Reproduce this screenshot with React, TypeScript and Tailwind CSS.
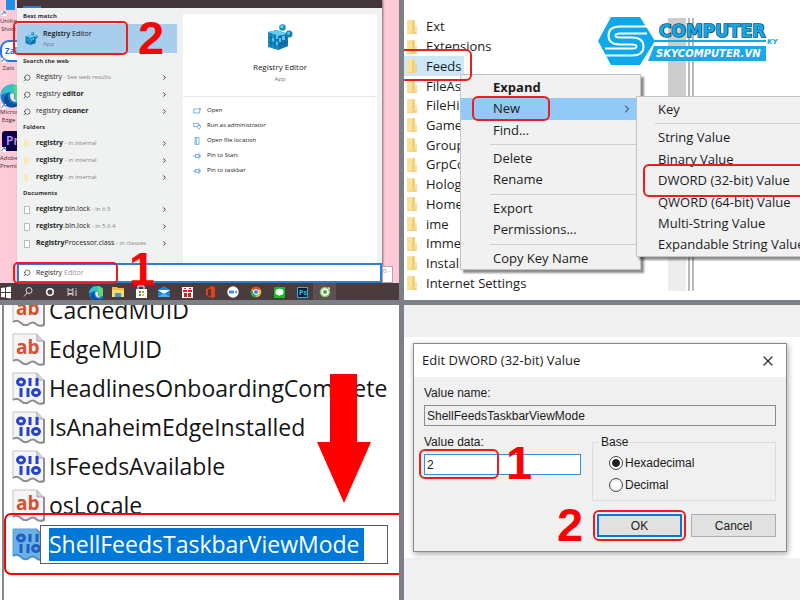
import type { ReactNode } from 'react';
import { ChevronRight, Search, X } from 'lucide-react';

const UI = "font-['Open_Sans','Noto_Sans',sans-serif]";
const ARIAL = "font-['Liberation_Sans',Arial,sans-serif]";

function Step({ n, className }: { n: number; className: string }) {
  return (
    <span
      className={`pointer-events-none absolute z-20 font-['Liberation_Sans',sans-serif] text-[47px] leading-none font-bold text-[#f60505] ${className}`}
    >
      {n}
    </span>
  );
}

function Mark({ className }: { className: string }) {
  return <span className={`pointer-events-none absolute z-20 border-2 border-[#ee1c1c] ${className}`} />;
}

/* ---------- start menu ---------- */

function RegistryIcon({ className }: { className: string }) {
  return (
    <svg viewBox="0 0 26 26" className={className} aria-hidden="true">
      <path d="M1 8 10 6 21 10 21 22 11 26 1 23Z" fill="#1b8fc6" />
      <path d="M1 8 10 6 21 10 11 12Z" fill="#63cdf1" />
      <path d="M11 12 21 10 21 22 11 26Z" fill="#1279b4" />
      <path d="M4 9v14M8 10v15M1 13l10 3 10-3M1 18l10 3 10-3M14 12v12M18 11v12" stroke="#0f5f94" strokeWidth="0.800" fill="none" />
      <path d="M5 14h2v3H5zM9 11h2v4H9zM12 14h2v4h-2zM15 12h3v4h-3zM9 18h2v3H9z" fill="#55c6ef" />
      <circle cx="15.500" cy="3.500" r="3.300" fill="#1d8fc6" />
      <circle cx="14.800" cy="2.600" r="1.500" fill="#6fd2f4" />
      <circle cx="22" cy="10" r="3.500" fill="#187fb6" />
      <circle cx="21.500" cy="9" r="1.500" fill="#62c9ef" />
    </svg>
  );
}

function EdgeIcon({ className }: { className: string }) {
  return (
    <svg viewBox="0 0 24 24" className={className} aria-hidden="true">
      <circle cx="12" cy="12" r="11.500" fill="#1477d0" />
      <path d="M.6 12C1 5 6 .5 12 .5c7 0 11.500 5 11.500 10 0 4-3 6-6 6-2.500 0-3.500-1-3-2 1.500-3 0-6-4-6-4.500 0-8.500 1.500-9.900 3.500Z" fill="#35c1c9" />
      <path d="M14 1c6 1 9.500 5 9.500 9.500 0 4-3 6-6 6-2.500 0-3.500-1-3-2 1-2 1-4-.5-5.500Z" fill="#5fd87a" />
      <path d="M8 12c0 6 5 9 12 7.500-4 5-12 5-15.500-.5C3 15 5 9 10 8.500 8.500 9.500 8 10.500 8 12Z" fill="#0d4f9e" />
      <path d="M10 11c0-2 3-2.500 4-.5.600 1.500 0 2.500 0 4 0 1.500 2 2.500 4 2.500-5 2.500-8-1.500-8-6Z" fill="#fbe3ea" />
    </svg>
  );
}

function Shortcut() {
  return (
    <svg viewBox="0 0 6 6" className="absolute -bottom-px left-px size-[5px]" aria-hidden="true">
      <path d="M0 0h6v6H0z" fill="#fff" />
      <path d="M1 5C1 3 2 2 4 2M2.500 1H5v2.500" stroke="#1559a8" fill="none" />
    </svg>
  );
}

function DesktopIcons() {
  const label = 'text-center text-[6px] leading-[8px] text-[#3a2a30]';
  return (
    <div className="flex w-[17px] shrink-0 flex-col overflow-hidden">
      <div className="relative flex h-[15px] justify-end pr-[2px]">
        <span className="h-[10px] w-[9px] bg-[#1f8fe8]" />
        <Shortcut />
      </div>
      <div className={`h-[25px] pt-[2px] ${label}`}>UniKey<br />Short</div>
      <div className="relative h-[22px]">
        <div className="flex h-[22px] w-[30px] items-center rounded-[9px] border-2 border-[#2478e8] bg-white pl-[3px] text-[8px] font-bold text-[#1a6de0]">
          Zalo
        </div>
        <Shortcut />
      </div>
      <div className={`h-[22px] pt-[2px] ${label}`}>Zalo</div>
      <div className="relative h-6">
        <EdgeIcon className="size-6 max-w-none" />
        <Shortcut />
      </div>
      <div className={`h-[23px] ${label}`}>Microsoft<br />Edge</div>
      <div className="relative h-[20px]">
        <div className="ml-[2px] h-[20px] w-6 rounded-[3px] bg-[#0c0047] pl-1 text-[12px] leading-[19px] font-semibold text-[#c79bff]">
          Pr
        </div>
        <Shortcut />
      </div>
      <div className={`pt-[3px] ${label}`}>Adobe<br />Premiere</div>
    </div>
  );
}

function GroupTitle({ children }: { children: ReactNode }) {
  return <h3 className="h-[15px] pl-[6px] text-[6px] leading-[15px] font-bold text-[#333]">{children}</h3>;
}

function ResultRow({ icon, children, hint }: { icon: 'search' | 'folder' | 'file'; children: ReactNode; hint?: string }) {
  return (
    <button type="button" className="flex h-[17px] w-full items-center pr-[9px] pl-[6px] text-left text-[#222]">
      <span className="flex w-[13px] shrink-0">
        {icon === 'search' && <Search className="size-2 -scale-x-100 text-[#333]" strokeWidth={2} />}
        {icon === 'folder' && <span className="ml-px h-[7px] w-1 bg-[#fbe7b4]" />}
        {icon === 'file' && <span className="ml-px h-2 w-[6px] border border-[#bbb] bg-white" />}
      </span>
      <span className="flex-1 whitespace-nowrap">
        {children}
        {hint && <span className="text-[6px] text-[#858585]"> - {hint}</span>}
      </span>
      <ChevronRight className="size-[7px] text-[#222]" strokeWidth={3} />
    </button>
  );
}

const actions = [
  { label: 'Open', d: 'M1 3h6M1 3v6h9V5M8 2h3v3M8 5l3-3' },
  { label: 'Run as administrator', d: 'M6 7H1V2h8v3M7 5h4v3q0 2-2 3-2-1-2-3Z' },
  { label: 'Open file location', d: 'M3 1h6v10H3zM5 1v10' },
  { label: 'Pin to Start', d: 'M0 6h4M4 3v6M4 4h5M4 8h5M9 2v8M9 5h2v2H9' },
  { label: 'Pin to taskbar', d: 'M0 6h4M4 3v6M4 4h5M4 8h5M9 2v8M9 5h2v2H9' },
];

const taskIcons: { name: string; art: ReactNode }[] = [
  { name: 'Start', art: <path d="M3 4l4-.6V8H3zM8 3.200l5-.7V8H8zM3 9h4v4.600L3 13zM8 9h5v5.500L8 13.800z" fill="#fff" /> },
  { name: 'Search', art: <><circle cx="9" cy="6.500" r="3" fill="none" stroke="#ddd" /><path d="M7 9l-3 3.500" stroke="#ddd" /></> },
  { name: 'Cortana', art: <circle cx="8" cy="8" r="3.300" fill="none" stroke="#fff" strokeWidth="1.500" /> },
  { name: 'Task view', art: <path d="M4 4v2h5V4M4 12v-2h5v2M4 6.500v3h5v-3M12 4v1M12 6v6" fill="none" stroke="#ddd" /> },
  { name: 'Edge', art: <EdgeIcon className="" /> },
  { name: 'Explorer', art: <><path d="M2 3h5l1 1h6v9H2z" fill="#f5b93a" /><path d="M2 6h12v7H2z" fill="#ffd96b" /><path d="M5 9h6v4H5z" fill="#3f95d8" /></> },
  { name: 'Store', art: <><path d="M5 5V2h6v3" fill="none" stroke="#fff" /><path d="M3 5h11v9H3z" fill="#fff" /><path d="M6 7h2v2H6z" fill="#f25022" /><path d="M9 7h2v2H9z" fill="#7fba00" /><path d="M6 10h2v2H6z" fill="#00a4ef" /><path d="M9 10h2v2H9z" fill="#ffb900" /></> },
  { name: 'Mail', art: <><path d="M2 6l6-4 6 4v7H2z" fill="#1787d8" /><path d="M2 6h12l-6 4z" fill="#fff" /><path d="M2 13l6-4 6 4z" fill="#47b2f3" /></> },
  { name: 'Gift', art: <><path d="M3 3h11v11H3z" fill="#fff" /><path d="M4 6h4v2H4zM9 6h4v2H9zM5 9h3v4H5zM9 9h3v4H9zM5 4h2v1H5zM10 4h2v1h-2z" fill="#d51f1f" /></> },
  { name: 'Office', art: <path d="M4 5l6-3 3 1v10l-3 1-6-2 5 .6V4.500L6 5.500V11l-2 1z" fill="#e3401b" /> },
  { name: 'Zoom', art: <><circle cx="8" cy="8" r="5.700" fill="#fff" /><path d="M4 6.500h5v3H4zM10 7.500l2-1v3l-2-1z" fill="#3d8df5" /></> },
  { name: 'Chrome', art: <><circle cx="8" cy="8" r="5.300" fill="#e8bf2c" /><path d="M3.400 5.400A5.300 5.300 0 0 1 12.600 5.400L8 6z" fill="#df4433" /><path d="M3.400 5.400A5.300 5.300 0 0 0 8 13.300L9 10 6 9z" fill="#35a452" /><circle cx="8" cy="8" r="2.500" fill="#3f7fe8" stroke="#fff" /></> },
  { name: 'Line', art: <><rect x="3" y="3" width="11" height="11" rx="1" fill="#11c21c" /><ellipse cx="8.500" cy="8" rx="4" ry="3.200" fill="#fff" /><path d="M8 12l3-2H7z" fill="#fff" /></> },
  { name: 'Photoshop', art: <><path d="M3.500 3.500h10v10h-10z" fill="#06202c" stroke="#26b3e0" /><text x="5" y="11" fontSize="7" fontWeight="700" fontFamily="Open Sans" fill="#35c3f0">Ps</text></> },
  { name: 'Coc Coc', art: <><circle cx="8" cy="8" r="5.300" fill="#7cc36a" /><circle cx="8" cy="8" r="3" fill="none" stroke="#fff" strokeWidth="1.500" /><circle cx="8" cy="8" r="1" fill="#2c8a33" /><path d="M11 3l2 1-1 2z" fill="#fff" /></> },
];

function StartMenuPanel() {
  return (
    <section className={`relative flex min-w-0 flex-col overflow-hidden bg-[#fccbd7] ${UI}`}>
      <div className="flex flex-1">
        <DesktopIcons />
        <div className="flex min-w-0 flex-1 flex-col shadow-[1px_0_2px_rgba(0,0,0,0.5)]">
          <div className="flex h-2 items-end bg-[#42363a] pl-[6px]">
            <span className="h-[2px] w-[18px] bg-[#2a7fca]" />
          </div>
          <div className="flex flex-1 bg-[#f0f1f1]">
            <div className="w-[160px] shrink-0 pt-px text-[7px]">
              <GroupTitle>Best match</GroupTitle>
              <div className="relative mb-px">
                <button type="button" className="flex h-[29px] w-full items-center bg-[#a9cdec] pl-2 text-left">
                  <RegistryIcon className="size-[13px]" />
                  <span className="ml-[5px] leading-[11px] text-[#111]">
                    <b className="font-semibold">Registry</b> Editor
                    <span className="block text-[6px] text-[#6d7f90]">App</span>
                  </span>
                </button>
                <Mark className="-top-[3px] -left-1 h-[34px] w-[115px] rounded-[5px]" />
                <Step n={2} className="-top-[10px] left-[121px]" />
              </div>
              <GroupTitle>Search the web</GroupTitle>
              <ResultRow icon="search" hint="See web results">Registry</ResultRow>
              <ResultRow icon="search">registry <b>editor</b></ResultRow>
              <ResultRow icon="search">registry <b>cleaner</b></ResultRow>
              <GroupTitle>Folders</GroupTitle>
              <ResultRow icon="folder" hint="in internal"><b>registry</b></ResultRow>
              <ResultRow icon="folder" hint="in internal"><b>registry</b></ResultRow>
              <ResultRow icon="folder" hint="in internal"><b>registry</b></ResultRow>
              <GroupTitle>Documents</GroupTitle>
              <ResultRow icon="file" hint="in 6.5"><b>registry</b>.bin.lock</ResultRow>
              <ResultRow icon="file" hint="in 5.6.4"><b>registry</b>.bin.lock</ResultRow>
              <ResultRow icon="file" hint="in classes"><b>Registry</b>Processor.class</ResultRow>
            </div>
            <div className="mt-[6px] mr-[5px] ml-[6px] flex-1 bg-white">
              <div className="flex h-[83px] flex-col items-center border-b border-[#e6e6e6] pt-[10px]">
                <RegistryIcon className="size-[26px]" />
                <h2 className="mt-[10px] text-[8px] leading-[14px] text-[#222]">Registry Editor</h2>
                <p className="text-[6px] leading-[10px] text-[#777]">App</p>
              </div>
              <ul className="pt-[6px] pl-[10px]">
                {actions.map((a) => (
                  <li key={a.label}>
                    <button type="button" className="flex h-[15px] items-center gap-[6px] text-[6px] text-[#222]">
                      <svg viewBox="0 0 12 12" className="size-2" fill="none" stroke="#3b8fd0" aria-hidden="true">
                        <path d={a.d} />
                      </svg>
                      {a.label}
                    </button>
                  </li>
                ))}
              </ul>
            </div>
          </div>
          <div className="relative">
            <label className="flex h-5 items-center border-2 border-[#2382d6] bg-white pl-1">
              <Search className="size-2 -scale-x-100 text-[#333]" strokeWidth={2} />
              <span className="relative ml-[5px] flex-1 text-[7px] leading-[14px]">
                <input aria-label="Search" defaultValue="Registry" className="block w-full bg-transparent text-[#222] outline-none" />
                <span className="pointer-events-none absolute top-0 left-[28px] text-[#999]">Editor</span>
              </span>
            </label>
            <Mark className="-top-px -left-1 h-[22px] w-[105px] rounded-[5px]" />
            <Step n={1} className="-top-[18px] left-[112px]" />
          </div>
        </div>
        <div className="flex w-[17px] shrink-0 flex-col justify-end">
          <div className="h-[17px] w-[11px] border border-[#b9a3a9] bg-white text-[6px] leading-2 whitespace-nowrap text-[#777]">0 -</div>
        </div>
      </div>
      <nav className="flex h-[17px] bg-[#4a3b3f] pr-[60px]">
        {taskIcons.map((t, i) => (
          <button
            key={t.name}
            type="button"
            aria-label={t.name}
            className={`flex items-center justify-center ${i < 4 ? 'w-[22px]' : 'w-[23px]'} shrink-0 ${i === 0 ? '-ml-[5px]' : ''} ${i === 14 ? 'bg-[#5c4e52]' : ''}`}
          >
            <svg viewBox={t.name === 'Edge' ? '-3 -3 30 30' : '0 0 16 16'} className="size-4" aria-hidden="true">
              {t.art}
            </svg>
          </button>
        ))}
      </nav>
    </section>
  );
}

/* ---------- registry tree and context menus ---------- */

const keys = [
  'Ext', 'Extensions', 'Feeds', 'FileAs', 'FileHi', 'Game', 'Group',
  'GrpCo', 'Holog', 'Home', 'ime', 'Imme', 'Install', 'Internet Settings',
];

function FolderIcon() {
  return (
    <svg viewBox="0 0 10 14" className="h-[14px] w-[10px] shrink-0" aria-hidden="true">
      <path d="M0 0h8v12l2 1v1H0z" fill="#f8d67c" />
      <path d="M0 0h6v13H0z" fill="#fbe29a" />
      <path d="M6 1v12M9 6v7" stroke="#e9c160" />
    </svg>
  );
}

function MenuItem({ children, className = '' }: { children: ReactNode; className?: string }) {
  return (
    <li className="relative flex flex-1">
      <button type="button" className={`flex w-full items-center text-left whitespace-nowrap ${className}`}>
        {children}
      </button>
    </li>
  );
}

function Separator({ className }: { className: string }) {
  return <li role="separator" className={`my-[3px] h-px border-t border-[#cfcfcf] ${className}`} />;
}

function Logo() {
  const s = 'M51 15H24q-8 0-8 5.500t8 5.500h12q8 0 8 5.500t-8 5.500H9';
  return (
    <svg viewBox="0 0 190 52" className="absolute top-[15px] right-[14px] z-30 h-[52px] w-[190px]" aria-hidden="true">
      <path d="M15 2h29l15 24-15 24H15L2 26z" fill="#0fa9ea" />
      <path d={s} fill="none" stroke="#fff" strokeWidth="9" />
      <path d={s} fill="none" stroke="#0fa9ea" strokeWidth="5" />
      <path d="M58 26h112" stroke="#0fa9ea" strokeWidth="2" />
      <path d="M58 31h112v15H52z" fill="#18a9ea" />
      <text x="63" y="22" fontFamily="DejaVu Sans" fontWeight="700" fontSize="17" fill="#12a9ea" stroke="#174a63" strokeWidth="1.600" paintOrder="stroke">
        COMPUTER
      </text>
      <text x="60" y="42" fontFamily="DejaVu Sans" fontWeight="700" fontStyle="italic" fontSize="10" fill="#fff">
        SKYCOMPUTER.VN
      </text>
      <text x="171" y="29" fontFamily="DejaVu Sans" fontWeight="700" fontStyle="italic" fontSize="7" fill="#0fa9ea">
        KY
      </text>
    </svg>
  );
}

function ContextMenuPanel() {
  const menu = 'absolute z-10 flex flex-col border border-[#c4c4c4] bg-[#f1f1f1] pt-[2px] shadow-[3px_3px_2px_rgba(0,0,0,0.45)]';
  return (
    <section className={`relative flex min-w-0 overflow-hidden bg-white text-[13px] text-[#1c1c1c] ${UI}`}>
      <ul className="flex flex-1 flex-col pt-[17px] pb-[7px]">
        {keys.map((k) => (
          <li key={k} className="relative flex flex-1">
            <button
              type="button"
              className={`flex items-center gap-[9px] pl-[3px] leading-[19px] ${k === 'Feeds' ? 'bg-[#cce8f8] pr-[3px]' : ''}`}
            >
              <FolderIcon />
              {k}
            </button>
            {k === 'Feeds' && <Mark className="-top-[7px] -left-2 h-8 w-[76px] rounded-[6px]" />}
          </li>
        ))}
      </ul>
      <div className="mt-[18px] mr-[106px] mb-[9px] flex w-[26px] shrink-0">
        <span className="flex w-[18px] flex-col bg-[#ededed]">
          <span className="h-4/5 bg-[#cdcdcd]" />
        </span>
        <span className="ml-[2px] w-[6px] border-x-2 border-[#b9b9bc]" />
      </div>
      <Logo />
      <ul className={`top-[74px] left-[56px] h-[196px] w-[181px] ${menu}`}>
        <MenuItem className="pl-8 font-bold">Expand</MenuItem>
        <li className="relative flex flex-1">
          <button type="button" className="flex w-full items-center justify-between bg-[#91c9f7] pr-[7px] pl-8">
            New
            <ChevronRight className="size-3" strokeWidth={2} />
          </button>
          <Mark className="-top-[2px] left-[11px] h-[25px] w-[78px] rounded-[6px]" />
        </li>
        <MenuItem className="pl-8">Find...</MenuItem>
        <Separator className="mr-[2px] ml-[29px]" />
        <MenuItem className="pl-8">Delete</MenuItem>
        <MenuItem className="pl-8">Rename</MenuItem>
        <Separator className="mr-[2px] ml-[29px]" />
        <MenuItem className="pl-8">Export</MenuItem>
        <MenuItem className="pl-8">Permissions...</MenuItem>
        <Separator className="mr-[2px] ml-[29px]" />
        <MenuItem className="pl-8">Copy Key Name</MenuItem>
      </ul>
      <ul className={`top-[96px] left-[232px] h-[161px] w-[190px] ${menu}`}>
        <MenuItem className="pl-[21px]">Key</MenuItem>
        <Separator className="ml-[18px]" />
        <MenuItem className="pl-[21px]">String Value</MenuItem>
        <MenuItem className="pl-[21px]">Binary Value</MenuItem>
        <li className="relative flex flex-1">
          <button type="button" className="flex w-full items-center pl-[21px] whitespace-nowrap">
            DWORD (32-bit) Value
          </button>
          <Mark className="-top-[6px] left-[6px] h-[33px] w-[180px] rounded-[6px]" />
        </li>
        <MenuItem className="pl-[21px]">QWORD (64-bit) Value</MenuItem>
        <MenuItem className="pl-[21px]">Multi-String Value</MenuItem>
        <MenuItem className="pl-[21px]">Expandable String Value</MenuItem>
      </ul>
    </section>
  );
}

/* ---------- value list ---------- */

function ValueIcon({ kind, selected = false }: { kind: 'text' | 'binary'; selected?: boolean }) {
  return (
    <svg viewBox="0 0 34 34" className="size-[34px] shrink-0" aria-hidden="true">
      <path
        d="M1 1h24l7 7v23q-5 2-8-1t-7 0-8-1-8-1z"
        fill={selected ? '#6bb0e6' : '#f5f5f7'}
        stroke={selected ? '#5a9fd4' : '#c3c3c6'}
      />
      <path d="M25 1v7h7" fill={selected ? '#5a9fd4' : '#d6d6d8'} stroke={selected ? '#5a9fd4' : '#a6a6a8'} />
      <path d="M32 8v23q-5 2-8-1t-7 0-8-1-8-1" fill="none" stroke={selected ? '#4c93cb' : '#8e8e92'} strokeWidth="2" />
      {kind === 'text' ? (
        <text x="4" y="21" fontFamily="Open Sans" fontWeight="700" fontSize="19" fill="#d8502f">
          ab
        </text>
      ) : (
        <g fill="none" stroke={selected ? '#1f5fc4' : '#2541cf'} strokeWidth="3">
          <ellipse cx="9" cy="10" rx="3.500" ry="3" />
          <path d="M18 6v8M25 6v8M9 16v9M16 16v9" />
          <ellipse cx="24" cy="20.500" rx="3.500" ry="3" />
        </g>
      )}
    </svg>
  );
}

const values: { name: string; kind: 'text' | 'binary' }[] = [
  { name: 'CachedMUID', kind: 'text' },
  { name: 'EdgeMUID', kind: 'text' },
  { name: 'HeadlinesOnboardingComplete', kind: 'binary' },
  { name: 'IsAnaheimEdgeInstalled', kind: 'binary' },
  { name: 'IsFeedsAvailable', kind: 'binary' },
  { name: 'osLocale', kind: 'text' },
];

function ValueListPanel() {
  return (
    <section className={`relative flex min-w-0 overflow-hidden bg-white pl-[2px] text-[23px] text-[#151515] ${UI}`}>
      <div className="flex-1 border-l-2 border-[#85898d] pl-2">
        <ul className="-mt-[14px]">
          {values.map((v) => (
            <li key={v.name} className="flex h-[39px] items-center gap-[3px] leading-[39px]">
              <ValueIcon kind={v.kind} />
              {v.name}
            </li>
          ))}
          <li className="relative flex h-[39px] items-center">
            <ValueIcon kind="binary" selected />
            <label className="relative z-10 -ml-[6px] flex h-[39px] w-[348px] items-center border border-[#5b5b5b] bg-white pl-2">
              <input
                aria-label="Value name"
                defaultValue="ShellFeedsTaskbarViewMode"
                className="h-[33px] w-[315px] bg-[#0078d7] text-white outline-none"
              />
            </label>
            <Mark className="-top-3 -left-2 h-[62px] w-[410px] rounded-[7px] border-[#ff0000]" />
          </li>
        </ul>
      </div>
      <svg viewBox="0 0 54 129" className="absolute top-[69px] right-[28px] h-[129px] w-[54px]" aria-hidden="true">
        <path d="M13 0h27v68h14L27 129 0 68h13z" fill="#f00" />
      </svg>
    </section>
  );
}

/* ---------- edit dialog ---------- */

function Radio({ label, checked = false }: { label: string; checked?: boolean }) {
  return (
    <label className="flex h-[22px] items-center gap-[2px]">
      <input
        type="radio"
        name="base"
        defaultChecked={checked}
        className="size-[14px] appearance-none rounded-full border border-[#444] bg-white bg-clip-content p-[2px] checked:bg-[#222] checked:shadow-[inset_0_0_0_2px_#fff]"
      />
      {label}
    </label>
  );
}

function EditDialogPanel() {
  return (
    <section className="min-w-0 overflow-hidden bg-[#f0f0f0] pt-8">
      <div className="bg-white pt-[6px] pr-[13px] pb-[6px] pl-[9px]">
        <div role="dialog" aria-labelledby="dlg-title" className={`border border-[#8a8a8a] bg-[#f0f0f0] text-[12px] text-[#1b1b1b] shadow-[1px_2px_6px_rgba(0,0,0,0.35)] ${ARIAL}`}>
          <header className="flex h-[33px] items-center justify-between bg-white pr-[10px] pl-2">
            <h2 id="dlg-title" className={`text-[13px] ${UI}`}>Edit DWORD (32-bit) Value</h2>
            <button type="button" aria-label="Close">
              <X className="size-4 text-[#333]" strokeWidth={2} />
            </button>
          </header>
          <div className="px-[10px] pt-2 pb-[14px]">
            <label htmlFor="vname" className="mb-1 block leading-4">Value name:</label>
            <input id="vname" readOnly defaultValue="ShellFeedsTaskbarViewMode" className="block h-[21px] w-full border border-[#8b8b8b] bg-[#f0f0f0] px-[2px] outline-none" />
            <div className="mt-2 flex gap-[11px]">
              <div className="w-[157px]">
                <label htmlFor="vdata" className="mb-1 block leading-4">Value data:</label>
                <div className="relative">
                  <input id="vdata" defaultValue="2" className="block h-[21px] w-full border border-[#3a8dd6] bg-white px-[2px] outline-none" />
                  <Mark className="-top-[5px] -left-[5px] h-[30px] w-[80px] rounded-[6px]" />
                  <Step n={1} className="-top-[15px] left-[82px]" />
                </div>
              </div>
              <fieldset className="h-[67px] flex-1 border border-[#dcdcdc] pl-4">
                <legend className="-ml-[10px] px-[2px] leading-4">Base</legend>
                <div className="pt-[2px]">
                  <Radio label="Hexadecimal" checked />
                  <Radio label="Decimal" />
                </div>
              </fieldset>
            </div>
            <div className="mt-[13px] flex justify-end gap-[9px]">
              <div className="relative">
                <button type="button" className="h-[23px] w-[85px] border-2 border-[#0f76d0] bg-[#e1e1e1]">OK</button>
                <Mark className="-top-1 -left-1 h-[31px] w-[93px] rounded-[6px]" />
                <Step n={2} className="-top-[13px] -left-[40px]" />
              </div>
              <button type="button" className="h-[23px] w-[85px] border border-[#adadad] bg-[#e1e1e1]">Cancel</button>
            </div>
          </div>
        </div>
      </div>
    </section>
  );
}

export default function App() {
  return (
    <main className="grid min-h-screen grid-cols-[minmax(0,399fr)_minmax(0,396fr)] grid-rows-[300fr_295fr] gap-[5px] bg-[#7a8086]">
      <StartMenuPanel />
      <ContextMenuPanel />
      <ValueListPanel />
      <EditDialogPanel />
    </main>
  );
}
